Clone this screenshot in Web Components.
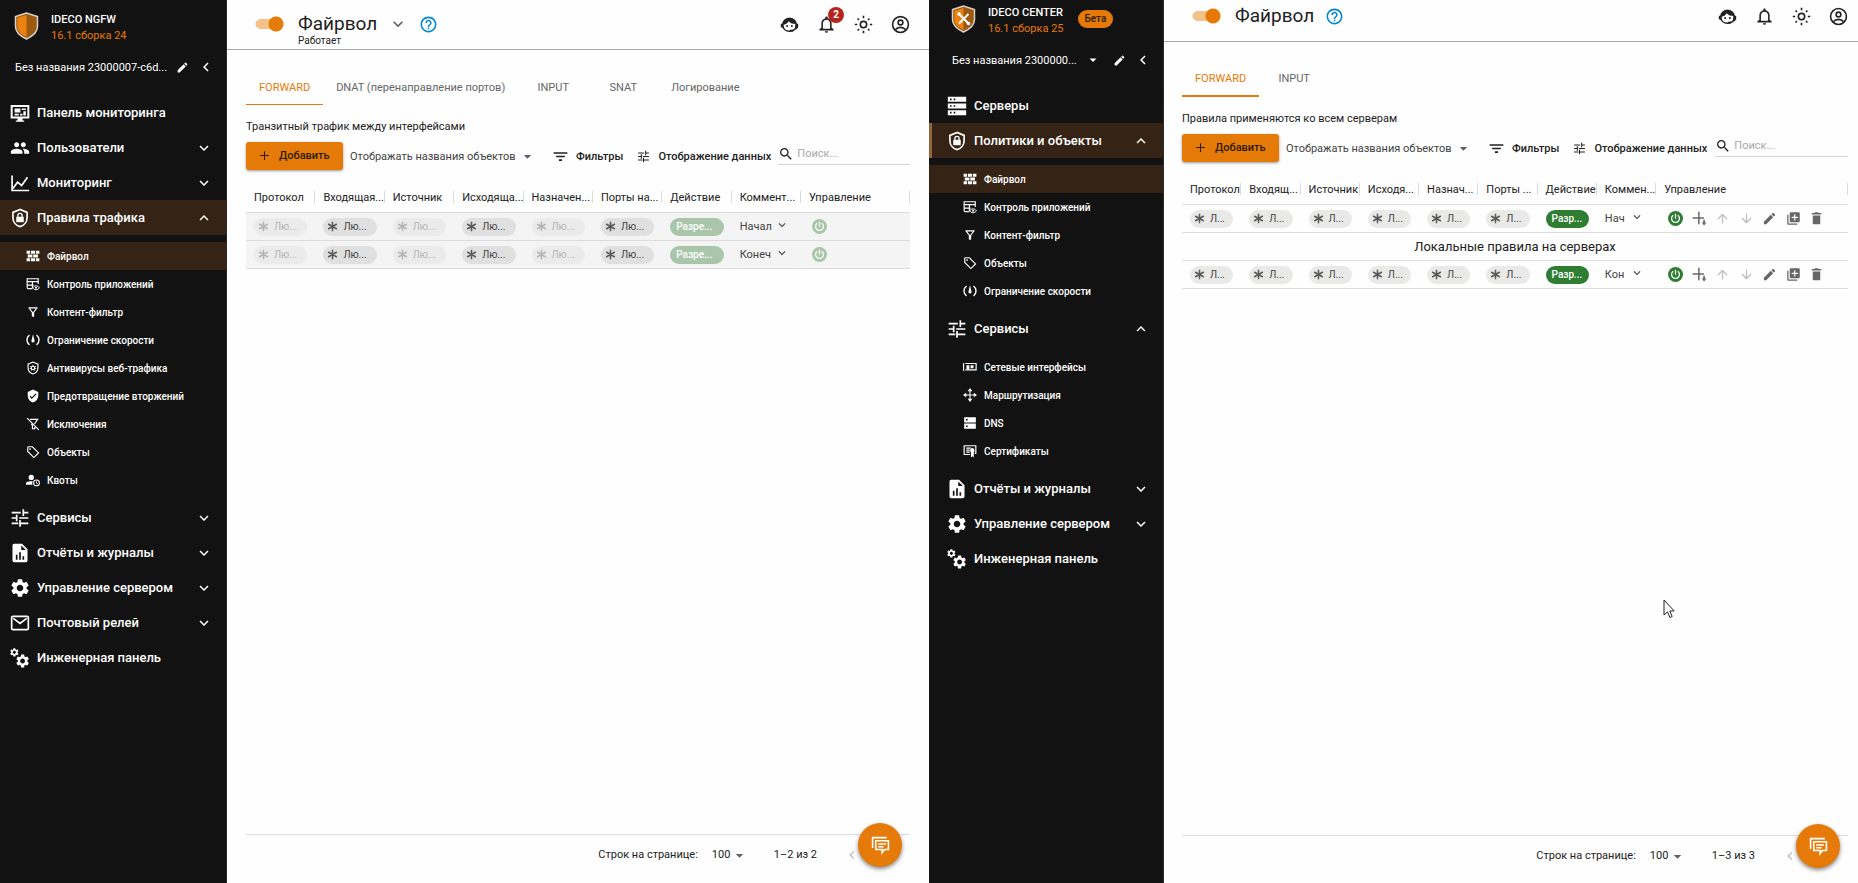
<!DOCTYPE html>
<html lang="ru">
<head>
<meta charset="utf-8">
<title>Ideco — Файрвол</title>
<style>
  body { margin: 0; font-family: Roboto, "Liberation Sans", sans-serif; font-size: 11px; color: #212121; }
  .desk { display: grid; grid-template-columns: 1fr 1fr; min-height: 100vh; }
  .center { --side: 235px; --inset: 8px; --head: 41px; --head-right: 10px; --tabline: 2px; --pad-left: 18px; --pad-right: 10px; --edge: 3px; --foot: 48px; --find: 8px; }
  .pointer { position: absolute; left: 1663px; top: 599px; width: 12px; height: 20px; }
</style>
</head>
<body>
<div class="desk">
  <console-app>
    <side-bar slot="side" product="IDECO NGFW" version="16.1 сборка 24" host="Без названия 23000007-c6d..." style="--gap-top: 9px">
      <nav-item icon="monitor">Панель мониторинга</nav-item>
      <nav-item icon="people" fold="down">Пользователи</nav-item>
      <nav-item icon="chart" fold="down">Мониторинг</nav-item>
      <nav-item icon="lock" fold="up" active>Правила трафика</nav-item>
      <nav-group>
        <nav-item sub icon="bricks" active>Файрвол</nav-item>
        <nav-item sub icon="appctl">Контроль приложений</nav-item>
        <nav-item sub icon="funnel">Контент-фильтр</nav-item>
        <nav-item sub icon="speed">Ограничение скорости</nav-item>
        <nav-item sub icon="virus">Антивирусы веб-трафика</nav-item>
        <nav-item sub icon="verified">Предотвращение вторжений</nav-item>
        <nav-item sub icon="nofunnel">Исключения</nav-item>
        <nav-item sub icon="tag">Объекты</nav-item>
        <nav-item sub icon="quota">Квоты</nav-item>
      </nav-group>
      <nav-item icon="tune" fold="down">Сервисы</nav-item>
      <nav-item icon="report" fold="down">Отчёты и журналы</nav-item>
      <nav-item icon="gear" fold="down">Управление сервером</nav-item>
      <nav-item icon="mail" fold="down">Почтовый релей</nav-item>
      <nav-item icon="gears">Инженерная панель</nav-item>
    </side-bar>
    <page-header heading="Файрвол" status="Работает" menu count="2"></page-header>
    <tab-strip tabs="FORWARD|DNAT (перенаправление портов)|INPUT|SNAT|Логирование"></tab-strip>
    <tool-bar caption="Транзитный трафик между интерфейсами"></tool-bar>
    <rules-table kind="local"></rules-table>
    <page-footer slot="foot" range="1–2 из 2"></page-footer>
  </console-app>

  <console-app class="center">
    <side-bar slot="side" product="IDECO CENTER" version="16.1 сборка 25" host="Без названия 2300000..." beta style="--gap-top: 2px">
      <nav-item icon="servers">Серверы</nav-item>
      <nav-item icon="lock" fold="up" active>Политики и объекты</nav-item>
      <nav-group>
        <nav-item sub icon="bricks" active>Файрвол</nav-item>
        <nav-item sub icon="appctl">Контроль приложений</nav-item>
        <nav-item sub icon="funnel">Контент-фильтр</nav-item>
        <nav-item sub icon="tag">Объекты</nav-item>
        <nav-item sub icon="speed">Ограничение скорости</nav-item>
      </nav-group>
      <nav-item icon="tune" fold="up">Сервисы</nav-item>
      <nav-group>
        <nav-item sub icon="netcard">Сетевые интерфейсы</nav-item>
        <nav-item sub icon="routes">Маршрутизация</nav-item>
        <nav-item sub icon="dns">DNS</nav-item>
        <nav-item sub icon="cert">Сертификаты</nav-item>
      </nav-group>
      <nav-item icon="report" fold="down">Отчёты и журналы</nav-item>
      <nav-item icon="gear" fold="down">Управление сервером</nav-item>
      <nav-item icon="gears">Инженерная панель</nav-item>
    </side-bar>
    <page-header heading="Файрвол"></page-header>
    <tab-strip tabs="FORWARD|INPUT"></tab-strip>
    <tool-bar caption="Правила применяются ко всем серверам"></tool-bar>
    <rules-table kind="central"></rules-table>
    <page-footer slot="foot" range="1–3 из 3"></page-footer>
  </console-app>
</div>
<svg class="pointer" viewBox="0 0 12 20" aria-hidden="true"><path d="M1 1v15l3.500-3.200 2.400 5.700 2.300-1-2.400-5.500h4.400z" fill="#fff" stroke="#222" stroke-width="1"/></svg>

<script>
const SHIELD = 'M12 1.800 3.500 5.300v6c0 5.200 3.500 9.700 8.500 11 5-1.300 8.500-5.800 8.500-11v-6z';
const GEAR = 'M19.14 12.94c.04-.3.06-.61.06-.94 0-.32-.02-.64-.07-.94l2.03-1.58c.18-.14.23-.41.12-.61l-1.92-3.32c-.12-.22-.37-.29-.59-.22l-2.39.96c-.5-.38-1.03-.7-1.62-.94l-.36-2.54c-.04-.24-.24-.41-.48-.41h-3.84c-.24 0-.43.17-.47.41l-.36 2.54c-.59.24-1.13.57-1.62.94l-2.39-.96c-.22-.08-.47 0-.59.22L2.740 8.870c-.12.21-.08.47.12.61l2.030 1.580c-.05.3-.09.63-.09.94s.02.64.07.94l-2.030 1.580c-.18.14-.23.41-.12.61l1.920 3.320c.12.22.37.29.59.22l2.390-.96c.5.38 1.030.7 1.620.94l.36 2.540c.05.24.24.41.48.41h3.840c.24 0 .44-.17.47-.41l.36-2.540c.59-.24 1.130-.56 1.620-.94l2.390.96c.22.08.47 0 .59-.22l1.920-3.320c.12-.22.07-.47-.12-.61l-2.010-1.580zM12 15.600c-1.980 0-3.600-1.620-3.600-3.600s1.620-3.600 3.600-3.600 3.600 1.620 3.600 3.600-1.620 3.600-3.600 3.600z';
const f = d => `<path fill="currentColor" fill-rule="evenodd" d="${d}"/>`;
const s = (d, w = 2) => `<path fill="none" stroke="currentColor" stroke-width="${w}" d="${d}"/>`;
const ICONS = {
  down: f('M7.410 8.590 12 13.170l4.590-4.580L18 10l-6 6-6-6z'),
  up: f('M7.410 15.410 12 10.830l4.590 4.580L18 14l-6-6-6 6z'),
  left: f('M15.410 7.410 14 6l-6 6 6 6 1.410-1.410L10.830 12z'),
  caret: f('M6 9.500l6 6 6-6z'),
  monitor: s('M2 3.500h20v14H2z', 2.4) + f('M5.500 6.500h7v5h-7zM14 6.500h5v2h-5zM5.500 13h5v2h-5zM12 13h3v2h-3zM16 10h3v5h-3zM9 18h6v3h2v1.500H7V21h2z'),
  people: f('M16 11c1.660 0 2.990-1.340 2.990-3S17.660 5 16 5c-1.660 0-3 1.340-3 3s1.340 3 3 3zm-8 0c1.660 0 2.990-1.340 2.990-3S9.660 5 8 5C6.340 5 5 6.340 5 8s1.340 3 3 3zm0 2c-2.330 0-7 1.170-7 3.500V19h14v-2.500c0-2.330-4.670-3.500-7-3.500zm8 0c-.29 0-.62.02-.97.05 1.160.84 1.970 1.970 1.970 3.450V19h6v-2.500c0-2.330-4.670-3.500-7-3.500z'),
  chart: s('M2.500 3v18H23M3.500 18.500 9 11l5 4 7-10'),
  lock: s(SHIELD, 2) + f('M7.500 10.500h9v6.500h-9z') + s('M9.500 11V9a2.500 2.500 0 0 1 5 0v2', 1.6),
  bricks: f('M1 3h6v5H1zM8.500 3h7v5h-7zM17 3h6v5h-6zM1 16h6v5H1zM8.500 16h7v5h-7zM17 16h6v5h-6zM3 9.500h8v5H3zM12.500 9.500h8v5h-8z'),
  appctl: s('M11 20H4a2 2 0 0 1-2-2V3h19v9M2 8h19M2 14h11M11 8v11', 2) + s('M11.500 18.500c3-4.500 8.500-4.500 11.500 0-3 4.500-8.500 4.500-11.500 0z', 1.700) + '<circle cx="17.200" cy="18.500" r="1.800" fill="currentColor"/>',
  funnel: f('M7 6h10l-5.010 6.300L7 6zm-2.750-.39C6.270 8.200 10 13 10 13v6c0 .55.45 1 1 1h2c.55 0 1-.45 1-1v-6s3.720-4.800 5.740-7.390c.51-.66.04-1.610-.79-1.610H5.040c-.83 0-1.300.95-.79 1.610z'),
  nofunnel: s('M2 2l20 20M7 4h13l-5.500 8M9 12l2 2v6h4v-3', 2),
  speed: s('M6 3.500a10.500 10.500 0 0 0 0 17M18 3.500a10.500 10.500 0 0 1 0 17', 2.4) + f('M12 2l2.600 11a2.700 2.700 0 1 1-5.200 0z'),
  virus: s(SHIELD, 2) + '<circle cx="12" cy="12" r="3" fill="none" stroke="currentColor" stroke-width="2"/>' + s('M12 6.500v3M7 9l2 1.500M17 9l-2 1.500M6.500 13H9M17.500 13H15M9 16.500l1-1.500M15 16.500l-1-1.500', 1.500),
  verified: f('M12 1 3 5v6c0 5.550 3.840 10.740 9 12 5.160-1.260 9-6.450 9-12V5l-9-4zm-2 16-4-4 1.410-1.410L10 14.170l6.590-6.590L18 9l-8 8z'),
  tag: s('M3 4.500A1.500 1.500 0 0 1 4.500 3H11l10.500 10.500-8 8L3 11z', 2) + '<circle cx="7" cy="7" r="1.500" fill="currentColor"/>',
  quota: f('M9 3a4.500 4.500 0 1 1 0 9 4.500 4.500 0 0 1 0-9zM9 14c1 0 1.800.1 2.700.3A7 7 0 0 0 11 20H0v-2.500C0 15 6 14 9 14z') + '<circle cx="18" cy="17" r="5" fill="none" stroke="currentColor" stroke-width="1.800"/>' + s('M18 14v3.500l2.300 1', 1.500),
  tune: f('M2 17.500v2h8v-2zM2 4.500v2h11v-2zM13 22.500v-3h9v-2h-9v-3h-2v8zM7 8v3H2v2h5v3h2V8zM22 13v-2H11v2zM15 9.500h2v-3h5v-2h-5v-3h-2z'),
  report: f('M5 1h9.500L21 7.500V21a2 2 0 0 1-2 2H5a2 2 0 0 1-2-2V3a2 2 0 0 1 2-2zM13.500 3v5.500H19zM7 14v6h2v-6zM11 11v9h2v-9zM15 16v4h2v-4z'),
  gear: `<g transform="translate(-1.200 -1.200) scale(1.100)">${f(GEAR)}</g>`,
  mail: s('M3.500 4h17a1.500 1.500 0 0 1 1.500 1.500v13a1.500 1.500 0 0 1-1.500 1.500h-17A1.500 1.500 0 0 1 2 18.500v-13A1.500 1.500 0 0 1 3.500 4zM4 6.500l8 6 8-6', 2),
  gears: `<g transform="translate(-1 -1) scale(.52)">${f(GEAR)}</g><g transform="translate(5.500 6) scale(.8)">${f(GEAR)}</g>`,
  servers: f('M1 1h22v6H1zM3.500 3v2h2V3zM8 3v2h2V3zM1 9h22v6H1zM3.500 11v2h2v-2zM8 11v2h2v-2zM1 17h22v6H1zM3.500 19v2h2v-2zM8 19v2h2v-2z'),
  dns: f('M2 2h20v9H2zM5 5.200v2.600h3V5.200zM2 13h20v9H2zM5 16.200v2.600h3v-2.600z'),
  netcard: s('M1 5v14M4 6h18.500v11H4', 2) + f('M6 9h5v7H6zM13 9h5v5h-5z'),
  routes: s('M12 3v18M3 12h18', 1.800) + f('M12 0l4 5.500H8zM12 24l4-5.500H8zM0 12l5.500-4v8zM24 12l-5.500-4v8z'),
  cert: s('M12 18H2V3h20v13h-2M5.500 7h8M5.500 10.500h6M5.500 14h6', 2) + f('M16 7a4 4 0 0 1 2.500 7v9L16 21l-2.500 2v-9A4 4 0 0 1 16 7z'),
  edit: f('M3 17.250V21h3.750L17.810 9.940l-3.750-3.750L3 17.250zM20.710 7.040c.39-.39.39-1.020 0-1.410l-2.340-2.340a1 1 0 0 0-1.410 0l-1.830 1.830 3.750 3.750 1.830-1.830z'),
  help: f('M11 18h2v-2h-2v2zm1-16C6.480 2 2 6.480 2 12s4.480 10 10 10 10-4.480 10-10S17.520 2 12 2zm0 18c-4.410 0-8-3.590-8-8s3.590-8 8-8 8 3.590 8 8-3.590 8-8 8zm0-14c-2.210 0-4 1.790-4 4h2c0-1.100.9-2 2-2s2 .9 2 2c0 2-3 1.750-3 5h2c0-2.250 3-2.500 3-5 0-2.210-1.790-4-4-4z'),
  agent: '<path d="M14 20.500h-2c-4.800 0-8.500-3.200-8.500-8S7.200 4.500 12 4.500s8.500 3.200 8.500 8-3 7-5.500 7" fill="none" stroke="currentColor" stroke-width="2"/>' + f('M3.500 12.500C3.500 6.500 8 3.500 12 3.500s8.500 3 8.500 8c-4.500 0-7.500-1-9.500-3.500-1.500 2.500-4 4.500-7.500 4.500zM1 11h3v5H2.500L1 15zM20 11h3v4.500L21 18h-2zM12.500 18.500h4v2.500h-4z') + '<circle cx="9" cy="14" r="1.300" fill="currentColor"/><circle cx="15" cy="14" r="1.300" fill="currentColor"/>',
  bell: f('M12 22.500c1.100 0 2-.9 2-2h-4c0 1.100.9 2 2 2zm6.500-6.500v-5.500c0-3.070-2.130-5.640-5-6.320V3.500c0-.83-.67-1.500-1.500-1.500s-1.500.67-1.500 1.500v.68c-2.860.68-5 3.240-5 6.320V16L3 18v1.500h18V18l-2.500-2zm-2 1.500h-9v-7c0-2.480 2-4.500 4.500-4.500s4.500 2.020 4.500 4.500v7z'),
  sun: '<circle cx="12" cy="12" r="4" fill="none" stroke="currentColor" stroke-width="2"/>' + s('M12 1v3M12 20v3M1 12h3M20 12h3M4.500 4.500l1.800 1.800M17.700 17.700l1.800 1.800M4.500 19.500l1.800-1.800M17.700 6.300l1.800-1.800', 2),
  user: '<circle cx="12" cy="12" r="10" fill="none" stroke="currentColor" stroke-width="2"/><circle cx="12" cy="9.500" r="3" fill="none" stroke="currentColor" stroke-width="2"/>' + s('M5.500 18.500c3-3.800 10-3.800 13 0', 2),
  plus: f('M19 12.800h-6.200V19h-1.600v-6.200H5v-1.600h6.200V5h1.600v6.200H19z'),
  lines: f('M9.500 19h5v-2.500h-5zM1 5v2.500h22V5zM5 13.200h14v-2.500H5z'),
  search: f('M15.500 14h-.79l-.28-.27C15.410 12.590 16 11.110 16 9.500 16 5.910 13.090 3 9.500 3S3 5.910 3 9.500 5.910 16 9.500 16c1.610 0 3.090-.59 4.230-1.570l.27.28v.79l5 4.990L20.490 19l-4.990-5zm-6 0C7.010 14 5 11.990 5 9.500S7.010 5 9.500 5 14 7.010 14 9.500 11.990 14 9.500 14z'),
  star: s('M12 1.500v21M2.500 6.500l19 11M21.500 6.500l-19 11', 3.4),
  power: '<circle cx="12" cy="12" r="12" fill="currentColor"/><path d="M12 4.500v8M8.300 6.800a6.300 6.300 0 1 0 7.400 0" fill="none" stroke="#fff" stroke-width="2"/>',
  insert: s('M11 1v20M1 11h18', 2.400) + f('M18 14h2.600v4.500H23L19.300 23l-3.700-4.500H18z'),
  arrowup: f('M4 12l1.410 1.410L11 7.830V20h2V7.830l5.580 5.590L20 12l-8-8-8 8z'),
  arrowdown: f('M20 12l-1.410-1.410L13 16.170V4h-2v12.170l-5.580-5.590L4 12l8 8 8-8z'),
  copy: f('M4 6H2v14c0 1.100.9 2 2 2h14v-2H4V6zm16-4H8c-1.100 0-2 .9-2 2v12c0 1.100.9 2 2 2h12c1.100 0 2-.9 2-2V4c0-1.100-.9-2-2-2zm-1 9h-4v4h-2v-4H9V9h4V5h2v4h4v2z'),
  trash: f('M6 19c0 1.100.9 2 2 2h8c1.100 0 2-.9 2-2V7H6v12zM19.500 3h-4l-1-1h-5l-1 1h-4v2.500h15z'),
  chat: s('M2 15V2h18', 2) + s('M6 6h16v11h-5l-3 4v-4H6zM9 10h10M9 13.500h7', 2),
};
const icon = (name, size) => `<svg class="i" width="${size}" height="${size}" viewBox="0 0 24 24" aria-hidden="true">${ICONS[name]}</svg>`;
const BASE = `<style>
  *, *::before { box-sizing: border-box; }
  .i { display: block; flex: none; }
  button, select, input { font: inherit; color: inherit; background: none; border: 0; padding: 0; margin: 0; }
  a { color: inherit; text-decoration: none; }
</style>`;
const define = (tag, render) => customElements.define(tag, class extends HTMLElement {
  constructor() { super(); this.attachShadow({ mode: 'open' }); }
  connectedCallback() { this.shadowRoot.innerHTML = BASE + render(this); }
});

define('console-app', () => `<style>
  :host { display: grid; grid-template-columns: var(--side, 227px) minmax(0, 1fr); background: #fefefe; }
  main { display: flex; flex-direction: column; }
  .grow { flex: 1; }
</style><slot name="side"></slot><main><slot></slot><div class="grow"></div><slot name="foot"></slot></main>`);

define('side-bar', el => {
  const beta = el.hasAttribute('beta');
  return `<style>
  :host { display: block; background: #121212; color: #fff; border-right: 1px solid #2a2a2a; }
  .brand { display: flex; align-items: center; padding: var(--gap-top) 0 0 calc(14px + var(--inset, 0px)); height: calc(34px + var(--gap-top)); }
  .names { margin-left: 12px; padding-top: 3px; font-weight: 500; line-height: 16px; white-space: nowrap; }
  .names b { display: block; font-weight: 500; }
  .names span { font-weight: 400; color: #e67a08; }
  .beta { margin-left: 14px; height: 18px; padding: 0 7px; border-radius: 9px; background: #e67a08; color: #2b1a06; font-size: 10px; font-weight: 500; line-height: 18px; }
  .host { display: flex; align-items: center; height: 24px; margin: 12px 11px 16px calc(15px + var(--inset, 0px)); }
  .host span { flex: 1; min-width: 0; white-space: nowrap; }
  .host button { margin-left: 8px; }
  .host .pick { margin-right: 5px; }
  nav { display: block; }
  </style>
  <div class="brand">
    <svg width="25" height="28" viewBox="0 0 25 28" aria-hidden="true">
      <path d="M12.500 1 1.500 4.500v10c0 5.500 4.500 9.500 11 12.500 6.500-3 11-7 11-12.500v-10z" fill="#9c5a10" stroke="#d8d4cc" stroke-width="1.500"/>
      <path d="M12.500 3 3.300 5.800v8.700c0 4.500 3.700 7.800 9.200 10.500z" fill="#ec8110"/>
      ${beta ? '<path d="M8 9l9.500 9.500M17.500 9 8 18.500" stroke="#fff" stroke-width="2"/><circle cx="8" cy="9" r="1.800" fill="#fff"/><circle cx="17.500" cy="18.500" r="1.800" fill="#fff"/>' : ''}
    </svg>
    <div class="names"><b>${el.getAttribute('product')}</b><span>${el.getAttribute('version')}</span></div>
    ${beta ? '<span class="beta">Бета</span>' : ''}
  </div>
  <div class="host"><span>${el.getAttribute('host')}</span>
    ${beta ? `<button class="pick" aria-label="Выбрать">${icon('caret', 14)}</button>` : ''}
    <button aria-label="Переименовать">${icon('edit', 13)}</button>
    <button aria-label="Свернуть">${icon('left', 18)}</button></div>
  <nav><slot></slot></nav>`;
});

define('nav-group', () => `<style>:host { display: block; padding: 7px 0 6px; }</style><slot></slot>`);

define('nav-item', el => {
  const sub = el.hasAttribute('sub');
  return `<style>
  :host { display: block; }
  :host([active]) { background: #352415; box-shadow: inset var(--edge, 0px) 0 #94653a; }
  :host([active][sub]) { box-shadow: none; }
  a { display: flex; align-items: center; height: 35px; padding: 0 13px 0 calc(10px + var(--inset, 0px)); font-size: 13px; font-weight: 500; white-space: nowrap; }
  .t { flex: 1; margin-left: 7px; }
  :host([sub]) a { height: 28px; padding-left: calc(26px + var(--inset, 0px)); font-size: 10px; }
  </style><a href="#">${icon(el.getAttribute('icon'), sub ? 14 : 20)}<span class="t"><slot></slot></span>${el.hasAttribute('fold') ? icon(el.getAttribute('fold'), 18) : ''}</a>`;
});

define('page-header', el => {
  const n = el.getAttribute('count'), st = el.getAttribute('status');
  return `<style>
  :host { display: block; border-bottom: 1px solid #a8a8a8; }
  header { display: flex; align-items: flex-end; height: var(--head, 49px); padding: 0 var(--head-right, 19px) 0 28px; }
  .row { display: flex; align-items: center; height: 50px; flex: 1; }
  input { appearance: none; width: 30px; height: 16px; margin: 0 13px 0 0; background: radial-gradient(circle at 21px 8px, #e67a08 7px, transparent 8px), linear-gradient(#f2c288, #f2c288) 4px 3px / 20px 10px no-repeat, radial-gradient(circle at 5px 8px, #f2c288 4px, transparent 5px); }
  h1 { margin: 0; font-size: 19px; font-weight: 400; line-height: 24px; }
  .title { position: relative; }
  .title small { position: absolute; left: 0; top: 23px; font-size: 10px; line-height: 12px; }
  .menu { margin-left: 11px; color: #616161; }
  .help { margin-left: 11px; color: #0288d1; }
  .act { display: flex; gap: 18px; margin-left: auto; }
  .act button { position: relative; }
  .badge { position: absolute; left: 11px; top: -8px; width: 16px; height: 16px; border-radius: 8px; background: #b3261e; color: #fff; font-size: 10px; font-weight: 700; line-height: 16px; text-align: center; }
  </style><header><div class="row">
    <input type="checkbox" checked aria-label="Файрвол включён">
    <div class="title"><h1>${el.getAttribute('heading')}</h1>${st ? `<small>${st}</small>` : ''}</div>
    ${el.hasAttribute('menu') ? `<button class="menu" aria-label="Меню">${icon('down', 20)}</button>` : ''}
    <button class="help" aria-label="Справка">${icon('help', 19)}</button>
    <div class="act">
      <button aria-label="Поддержка">${icon('agent', 19)}</button>
      <button aria-label="Уведомления">${icon('bell', 19)}${n ? `<span class="badge">${n}</span>` : ''}</button>
      <button aria-label="Тема">${icon('sun', 19)}</button>
      <button aria-label="Профиль">${icon('user', 19)}</button>
    </div></div></header>`;
});

define('tab-strip', el => `<style>
  :host { display: flex; padding: 20px 18px 0 var(--pad-left, 19px); }
  button { height: 35px; min-width: 70px; padding: 0 13px; color: #666; white-space: nowrap; border-bottom: var(--tabline, 1px) solid transparent; }
  button:first-of-type { color: #e67a08; border-color: #e67a08; }
</style>${el.getAttribute('tabs').split('|').map((t, i) => `<button role="tab" aria-selected="${i === 0}">${t}</button>`).join('')}`);

define('tool-bar', el => `<style>
  :host { display: block; padding: 14px var(--pad-right, 19px) 0 var(--pad-left, 19px); }
  p { margin: 0 0 7px; line-height: 16px; }
  .bar { display: flex; align-items: center; white-space: nowrap; }
  .add { display: flex; align-items: center; width: 97px; height: 28px; padding: 0 12px 2px 11px; gap: 7px; border-radius: 3px; background: #e67a08; color: #2b1a06; font-weight: 500; box-shadow: 0 1px 3px #0006; }
  .pick { position: relative; display: flex; align-items: center; margin-left: 7px; }
  select { appearance: none; width: 185px; height: 20px; color: #424242; }
  .pick .i { position: absolute; right: 0; color: #616161; pointer-events: none; }
  .flat { display: flex; align-items: center; gap: 8px; margin-left: 18px; font-weight: 500; }
  .flat + .flat { margin-left: 14px; }
  .find { display: flex; align-items: center; flex: 1; min-width: 0; height: 22px; margin: 0 0 4px var(--find, 7px); border-bottom: 1px solid #d6d6d6; }
  .find input { width: 100%; min-width: 0; height: 18px; margin-left: 3px; outline: 0; }
  .find input::placeholder { color: #a8a8a8; opacity: 1; }
</style><p>${el.getAttribute('caption')}</p>
<div class="bar">
  <button class="add">${icon('plus', 15)}Добавить</button>
  <span class="pick"><select aria-label="Вид объектов"><option>Отображать названия объектов</option></select>${icon('caret', 15)}</span>
  <button class="flat">${icon('lines', 15)}Фильтры</button>
  <button class="flat">${icon('tune', 13)}Отображение данных</button>
  <label class="find">${icon('search', 16)}<input type="search" placeholder="Поиск..." aria-label="Поиск"></label>
</div>`);

define('any-chip', el => `<style>
  :host { display: flex; align-items: center; width: 100%; height: 18px; padding-left: 4px; gap: 5px; border-radius: 9px; background: var(--chip, #e0e0e0); font-size: 10px; color: #424242; }
  :host([dim]) { background: #ebebeb; color: #b4b4b4; }
  .i { color: #5a5a5a; } :host([dim]) .i { color: #b4b4b4; }
</style>${icon('star', 11)}<slot></slot>`);

define('rules-table', el => {
  const central = el.getAttribute('kind') === 'central';
  const heads = central
    ? ['Протокол', 'Входящ...', 'Источник', 'Исходя...', 'Назнач...', 'Порты ...', 'Действие', 'Коммен...', 'Управление']
    : ['Протокол', 'Входящая...', 'Источник', 'Исходяща...', 'Назначен...', 'Порты на...', 'Действие', 'Коммент...', 'Управление'];
  const row = note => {
    const chips = [1, 0, 1, 0, 1, 0].map(d => `<td><any-chip ${d && !central ? 'dim' : ''}>${central ? 'Л...' : 'Лю...'}</any-chip></td>`).join('');
    const extra = central ? [['insert', 'Вставить'], ['arrowup', 'Выше'], ['arrowdown', 'Ниже'], ['edit', 'Изменить'], ['copy', 'Копировать'], ['trash', 'Удалить']]
      .map(([n, l]) => `<button class="${n}" aria-label="${l}">${icon(n, 15)}</button>`).join('') : '';
    return `<tr class="rule">${chips}<td><span class="allow">${central ? 'Разр...' : 'Разре...'}</span></td>
      <td><span class="note"><span>${note}</span>${icon('down', 14)}</span></td>
      <td><span class="acts"><button class="power" aria-label="Выключить">${icon('power', 15)}</button>${extra}</span></td></tr>`;
  };
  return `<style>
  :host { display: block; padding: 12px var(--pad-right, 19px) 0 var(--pad-left, 19px); --chip: ${central ? '#e9e9e8' : '#e0e0e0'}; }
  table { width: 100%; table-layout: fixed; border-collapse: separate; border-spacing: 0; }
  col { width: ${central ? '8.9%' : '10.45%'}; } col:last-child { width: auto; }
  th { height: 31px; padding: 0 0 0 8px; font-weight: 400; text-align: left; white-space: nowrap; border-bottom: 1px solid #dcdcdc;
    background: linear-gradient(#dcdcdc, #dcdcdc) right center / 1px 12px no-repeat; }
  td { height: 28px; padding: 0 8px; border-bottom: 1px solid #dcdcdc; background: ${central ? 'none' : '#f4f4f4'}; }
  td:nth-child(n+7) { padding-right: 0; }
  .allow { display: block; width: calc(100% - 8px); height: 18px; padding-left: 6px; border-radius: 9px; font-size: 10px; font-weight: 500; line-height: 18px; color: #fff; background: ${central ? '#2e7d32' : '#a9c6ab'}; }
  .note { display: flex; align-items: center; color: #424242; }
  .note span { width: ${central ? '22px' : '32px'}; white-space: nowrap; line-height: 16px; }
  .note .i { margin: 0 0 4px 3px; }
  .acts { display: flex; justify-content: space-between; margin-left: ${central ? '4px' : '3px'}; width: ${central ? '156px' : '15px'}; color: #666; }
  .acts button { width: 15px; }
  .power { color: ${central ? '#2e7d32' : '#a9c6ab'}; }
  .arrowup, .arrowdown { color: #bdbdbd; }
  .group { text-align: center; font-size: 13px; }
  </style><table><colgroup>${'<col>'.repeat(9)}</colgroup>
  <thead><tr>${heads.map(h => `<th scope="col">${h}</th>`).join('')}</tr></thead>
  <tbody>${row(central ? 'Нач' : 'Начал')}${central ? '<tr><td class="group" colspan="9">Локальные правила на серверах</td></tr>' : ''}${row(central ? 'Кон' : 'Конеч')}</tbody></table>`;
});

define('page-footer', el => `<style>
  :host { display: block; padding: 0 var(--pad-right, 19px) 0 var(--pad-left, 19px); }
  footer { position: relative; display: flex; align-items: flex-start; height: var(--foot, 49px); padding: 12px 50px 0 0; justify-content: flex-end; border-top: 1px solid #dcdcdc; line-height: 16px; white-space: nowrap; }
  .pick { position: relative; display: flex; margin: 0 27px 0 14px; }
  select { appearance: none; width: 35px; height: 16px; }
  .pick .i { position: absolute; right: 0; top: 1px; color: #616161; pointer-events: none; }
  .prev { margin-left: 27px; color: #bdbdbd; }
  .fab { position: absolute; right: 8px; top: -12px; width: 44px; height: 44px; display: grid; place-items: center; border-radius: 50%; background: #e67a08; color: #fff; box-shadow: 0 2px 4px #0007; }
</style><footer><label for="n">Строк на странице:</label>
  <span class="pick"><select id="n"><option>100</option></select>${icon('caret', 15)}</span>
  <span>${el.getAttribute('range')}</span>
  <button class="prev" aria-label="Назад">${icon('left', 16)}</button>
  <button class="fab" aria-label="Чат">${icon('chat', 19)}</button></footer>`);
</script>
</body>
</html>
